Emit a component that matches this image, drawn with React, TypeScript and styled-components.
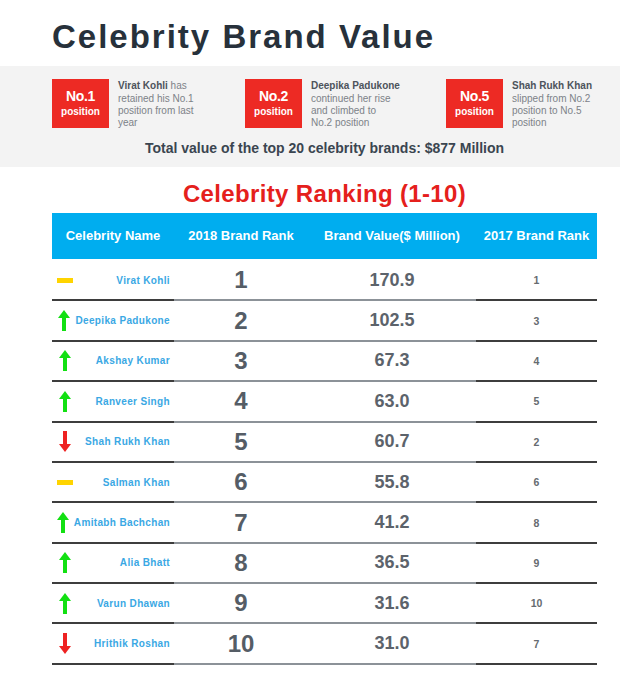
import React from "react";
import styled, { createGlobalStyle } from "styled-components";

const Global = createGlobalStyle`
  html, body { margin: 0; padding: 0; background: #ffffff; }
  body { font-family: "Liberation Sans", Arial, Helvetica, sans-serif; }
`;

const Page = styled.div`
  width: 620px;
  padding-top: 16.6px;
  font-family: "Liberation Sans", Arial, Helvetica, sans-serif;
`;

const Title = styled.h1`
  margin: 0 0 9.4px 0;
  padding-left: 52px;
  font-size: 33px;
  line-height: 40px;
  font-weight: 700;
  letter-spacing: 2px;
  color: #27313b;
`;

const Band = styled.section`
  background: #f3f3f3;
  padding: 13px 0 11px 52px;
`;

const BadgeRow = styled.div`
  display: grid;
  grid-template-columns: 193px 201px auto;
  height: 49px;
`;

const BadgeItem = styled.div`
  display: flex;
  align-items: flex-start;
  gap: 9px;
`;

const Badge = styled.div`
  width: 57px;
  height: 49px;
  flex: none;
  background: #ed2a24;
  color: #ffffff;
  display: flex;
  flex-direction: column;
  align-items: center;
  justify-content: center;
  gap: 2px;
  font-weight: 700;
`;

const BadgeNo = styled.span`
  font-size: 14px;
  line-height: 16px;
  letter-spacing: -0.3px;
`;

const BadgePos = styled.span`
  font-size: 10px;
  line-height: 12px;
`;

const BadgeText = styled.p`
  margin: 0;
  padding-top: 1.5px;
  font-size: 10px;
  line-height: 12.3px;
  color: #7d8288;
  white-space: nowrap;
  b { color: #4d545c; font-weight: 700; }
`;

const Total = styled.p`
  margin: 12px 0 0 0;
  width: 545px;
  text-align: center;
  font-size: 14px;
  line-height: 16px;
  font-weight: 700;
  color: #3a4550;
`;

const RankSection = styled.section`
  margin-left: 52px;
  width: 545px;
`;

const RankTitle = styled.h2`
  margin: 12.7px 0 5.3px 0;
  text-align: center;
  font-size: 24px;
  line-height: 28px;
  font-weight: 700;
  letter-spacing: 0.35px;
  color: #e5201c;
`;

const cols = "122px 134px 168px 121px";

const Header = styled.div`
  display: grid;
  grid-template-columns: ${cols};
  height: 46px;
  background: #00adef;
  margin-bottom: 2px;
`;

const HeadCell = styled.div`
  display: flex;
  align-items: center;
  justify-content: center;
  color: #ffffff;
  font-size: 13px;
  font-weight: 700;
  white-space: nowrap;
`;

const Row = styled.div`
  display: grid;
  grid-template-columns: ${cols};
  height: 40.4px;
`;

const Cell = styled.div<{ $dark?: boolean }>`
  display: flex;
  align-items: center;
  justify-content: center;
  border-bottom: 2px solid ${(p) => (p.$dark ? "#3d3d3d" : "#8c9298")};
  font-weight: 700;
  white-space: nowrap;
`;

const NameCell = styled(Cell)`
  justify-content: space-between;
  padding-right: 4px;
`;

const IconBox = styled.span`
  width: 26px;
  display: flex;
  align-items: center;
  justify-content: center;
`;

const Name = styled.span`
  font-size: 10px;
  letter-spacing: 0.35px;
  color: #3aa8e4;
`;

const Rank = styled.span`
  font-size: 24px;
  color: #555d66;
`;

const Value = styled.span`
  font-size: 18px;
  color: #5c636b;
`;

const Prev = styled.span`
  font-size: 10.5px;
  color: #666b70;
`;

const Dash = styled.span`
  display: block;
  width: 16px;
  height: 5px;
  background: #ffd400;
`;

type Trend = "up" | "down" | "same";

const TrendIcon = ({ trend }: { trend: Trend }) => {
  if (trend === "same") return <Dash />;
  const up = trend === "up";
  return (
    <svg width="12" height="21" viewBox="0 0 12 21">
      {up ? (
        <polygon points="6,0 12,8 8,8 8,21 4,21 4,8 0,8" fill="#12e012" />
      ) : (
        <polygon points="4,0 8,0 8,13 12,13 6,21 0,13 4,13" fill="#ee2222" />
      )}
    </svg>
  );
};

const rows: { name: string; rank: number; value: string; prev: number; trend: Trend }[] = [
  { name: "Virat Kohli", rank: 1, value: "170.9", prev: 1, trend: "same" },
  { name: "Deepika Padukone", rank: 2, value: "102.5", prev: 3, trend: "up" },
  { name: "Akshay Kumar", rank: 3, value: "67.3", prev: 4, trend: "up" },
  { name: "Ranveer Singh", rank: 4, value: "63.0", prev: 5, trend: "up" },
  { name: "Shah Rukh Khan", rank: 5, value: "60.7", prev: 2, trend: "down" },
  { name: "Salman Khan", rank: 6, value: "55.8", prev: 6, trend: "same" },
  { name: "Amitabh Bachchan", rank: 7, value: "41.2", prev: 8, trend: "up" },
  { name: "Alia Bhatt", rank: 8, value: "36.5", prev: 9, trend: "up" },
  { name: "Varun Dhawan", rank: 9, value: "31.6", prev: 10, trend: "up" },
  { name: "Hrithik Roshan", rank: 10, value: "31.0", prev: 7, trend: "down" },
];

export default function App() {
  return (
    <Page>
      <Global />
      <Title>Celebrity Brand Value</Title>
      <Band>
        <BadgeRow>
          <BadgeItem>
            <Badge>
              <BadgeNo>No.1</BadgeNo>
              <BadgePos>position</BadgePos>
            </Badge>
            <BadgeText>
              <b>Virat Kohli</b> has<br />retained his No.1<br />position from last<br />year
            </BadgeText>
          </BadgeItem>
          <BadgeItem>
            <Badge>
              <BadgeNo>No.2</BadgeNo>
              <BadgePos>position</BadgePos>
            </Badge>
            <BadgeText>
              <b>Deepika Padukone</b><br />continued her rise<br />and climbed to<br />No.2 position
            </BadgeText>
          </BadgeItem>
          <BadgeItem>
            <Badge>
              <BadgeNo>No.5</BadgeNo>
              <BadgePos>position</BadgePos>
            </Badge>
            <BadgeText>
              <b>Shah Rukh Khan</b><br />slipped from No.2<br />position to No.5<br />position
            </BadgeText>
          </BadgeItem>
        </BadgeRow>
        <Total>Total value of the top 20 celebrity brands: $877 Million</Total>
      </Band>
      <RankSection>
        <RankTitle>Celebrity Ranking (1-10)</RankTitle>
        <Header>
          <HeadCell>Celebrity Name</HeadCell>
          <HeadCell>2018 Brand Rank</HeadCell>
          <HeadCell>Brand Value($ Million)</HeadCell>
          <HeadCell>2017 Brand Rank</HeadCell>
        </Header>
        {rows.map((r) => (
          <Row key={r.name}>
            <NameCell $dark>
              <IconBox>
                <TrendIcon trend={r.trend} />
              </IconBox>
              <Name>{r.name}</Name>
            </NameCell>
            <Cell>
              <Rank>{r.rank}</Rank>
            </Cell>
            <Cell>
              <Value>{r.value}</Value>
            </Cell>
            <Cell $dark>
              <Prev>{r.prev}</Prev>
            </Cell>
          </Row>
        ))}
      </RankSection>
    </Page>
  );
}
